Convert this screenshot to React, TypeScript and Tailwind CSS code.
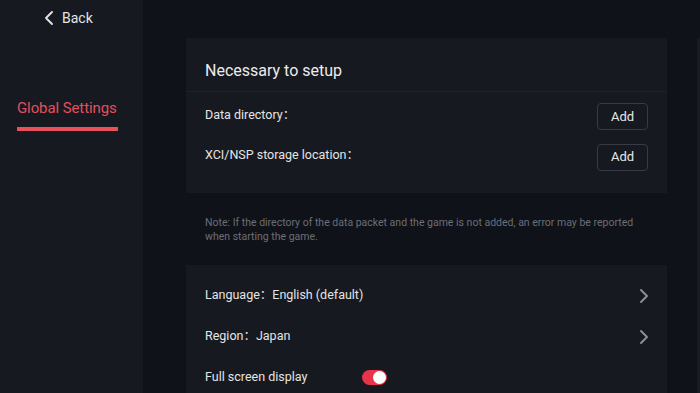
// ─── Pieces ─────────────────────────────────────────────────────────

function Chevron({ left, className }: { left?: boolean; className?: string }) {
  return (
    <svg width="10" height="16" viewBox="0 0 10 16" fill="none" className={className}>
      <path
        d={left ? "M8 2 L2 8 L8 14" : "M2 2 L8 8 L2 14"}
        stroke="currentColor"
        strokeWidth="1.9"
        strokeLinecap="round"
        strokeLinejoin="round"
      />
    </svg>
  );
}

function AddButton() {
  return (
    <button className="w-[51px] h-[27px] rounded-[4px] border border-[#383b43] text-[13px] text-[#e8e8e8] flex items-center justify-center">
      Add
    </button>
  );
}

function Toggle() {
  return (
    <div className="w-[25px] h-[15px] rounded-full bg-[#e8344b] flex items-center justify-end pr-[1px]">
      <div className="w-[13px] h-[13px] rounded-full bg-white" />
    </div>
  );
}

// ─── Main ───────────────────────────────────────────────────────────

export default function App() {
  return (
    <div
      className="w-[700px] h-[393px] overflow-hidden flex bg-[#0f1219] text-[#e6e6e6]"
      style={{ fontFamily: "Roboto, 'Noto Sans CJK SC', 'Liberation Sans', sans-serif" }}
    >
      {/* sidebar */}
      <div className="w-[143px] shrink-0 bg-[#161920] flex flex-col">
        <div className="h-[37px] flex items-center pl-[44px] gap-[8px] text-[14px] text-[#e4e4e4]">
          <Chevron left className="-mt-[1px]" />
          <span>Back</span>
        </div>
        <div className="mt-[60px] pl-[17px]">
          <div className="text-[15px] text-[#e2505e] leading-[22px] tracking-[-0.1px]">Global Settings</div>
          <div className="mt-[8px] w-[101px] h-[4px] bg-[#e8505c]" />
        </div>
      </div>

      {/* content */}
      <div className="flex-1 pl-[43px] pt-[38px] flex">
        <div className="w-[481px] flex flex-col">
          <div className="bg-[#161920] h-[155px] shrink-0 flex flex-col">
            <div className="h-[54px] border-b border-[#1f222a] flex items-center pl-[19px] pt-[12px] text-[16px] text-[#ececec]">
              Necessary to setup
            </div>
            <div className="flex items-center justify-between pl-[19px] pr-[19px] h-[45px] pt-[4px]">
              <span className="text-[12.5px] text-[#e4e4e4] -mt-[2px]">Data directory：</span>
              <AddButton />
            </div>
            <div className="flex items-center justify-between pl-[19px] pr-[19px] h-[40px]">
              <span className="text-[12.5px] text-[#e4e4e4] -mt-[3px]">XCI/NSP storage location：</span>
              <AddButton />
            </div>
          </div>

          <div className="pl-[19px] pr-[16px] pt-[23px] text-[10.5px] leading-[14px] text-[#6c6f76] shrink-0">
            Note: If the directory of the data packet and the game is not added, an error may be reported when starting the game.
          </div>

          <div className="mt-[21px] bg-[#161920] flex-1 flex flex-col pt-[10px]">
            <div className="h-[41px] shrink-0 flex items-center justify-between pl-[19px] pr-[18px]">
              <span className="text-[12.5px] text-[#e4e4e4]">Language：English (default)</span>
              <Chevron className="text-[#8d9097]" />
            </div>
            <div className="h-[41px] shrink-0 flex items-center justify-between pl-[19px] pr-[18px]">
              <span className="text-[12.5px] text-[#e4e4e4]">Region：Japan</span>
              <Chevron className="text-[#8d9097]" />
            </div>
            <div className="h-[40px] shrink-0 flex items-center pl-[19px]">
              <span className="text-[12.5px] text-[#e4e4e4] w-[157px]">Full screen display</span>
              <Toggle />
            </div>
          </div>
        </div>
        <div className="flex-1" />
        <div className="w-[3px] bg-[#181b22]" />
      </div>
    </div>
  );
}
